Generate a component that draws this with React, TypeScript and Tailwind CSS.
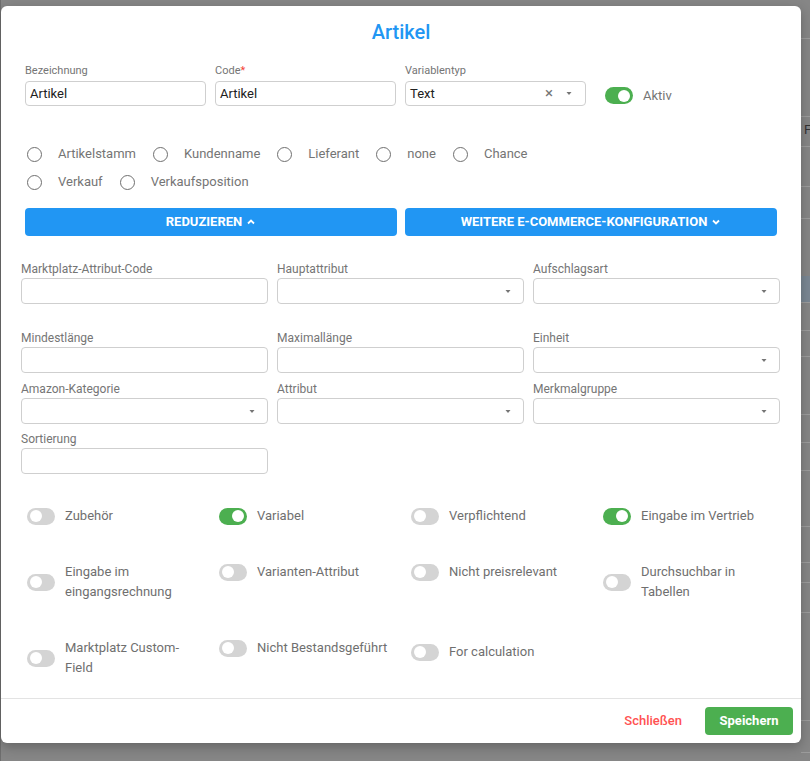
const font = { fontFamily: "Roboto, 'Liberation Sans', sans-serif" };

function Caret() {
  return (
    <svg width="8" height="5" viewBox="0 0 8 5" className="shrink-0">
      <path d="M1.5 1h5L4 4z" fill="#757575" />
    </svg>
  );
}

function Field({ label, select, className = "" }: { label: string; select?: boolean; className?: string }) {
  return (
    <div className={className}>
      <div className="mb-[3px] text-[12px] leading-[12px] text-[#757575]">{label}</div>
      <div className="flex h-[26px] items-center justify-end rounded-[4px] border border-[#cfcfcf] bg-white pr-[11px]">
        {select && <Caret />}
      </div>
    </div>
  );
}

function Toggle({ on }: { on?: boolean }) {
  return (
    <div
      className={`flex h-[17px] w-[28px] shrink-0 items-center rounded-full px-[3px] ${
        on ? "justify-end bg-[#4caf50]" : "justify-start bg-[#d4d4d4]"
      }`}
    >
      <div className="h-[12px] w-[12px] rounded-full bg-white" />
    </div>
  );
}

function ToggleItem({ label, on, className = "" }: { label: string; on?: boolean; className?: string }) {
  return (
    <div className={`flex items-center gap-[10px] ${className}`}>
      <Toggle on={on} />
      <span className="w-[136px] text-[13px] leading-[20px] text-[#6f6f6f]">{label}</span>
    </div>
  );
}

function Radio({ label }: { label: string }) {
  return (
    <div className="flex items-center gap-[16px]">
      <div className="h-[15px] w-[15px] rounded-full border-[1.5px] border-[#6f6f6f]" />
      <span className="text-[13px] text-[#757575]">{label}</span>
    </div>
  );
}

export default function App() {
  const bgRows = [38, 116, 146, 186, 218, 276, 302, 330, 356, 414, 442, 470, 526, 562, 582, 612, 720, 752];
  return (
    <div className="relative h-[761px] w-[810px] overflow-hidden bg-[#868686]" style={font}>
      {/* underlying page peeking out on the right */}
      {bgRows.map((y) => (
        <div key={y} className="absolute left-[801px] h-px w-[9px] bg-[#9c9c9c]" style={{ top: y }} />
      ))}
      <div className="absolute left-[801px] top-[276px] h-[26px] w-[9px] bg-[#7a8793]" />
      <div className="absolute left-[804px] top-[120px] text-[13px] text-[#333]">F</div>
      <div className="absolute left-0 top-0 h-full w-px bg-[#6e6e6e]" />

      <div className="absolute left-[1px] top-[6px] flex h-[737px] w-[800px] flex-col rounded-[6px] bg-white shadow-[0_4px_12px_rgba(0,0,0,0.25)]">
        <div className="flex-1">
          <h2 className="pt-[16px] text-center text-[20px] font-medium leading-[20px] text-[#2196f3]">Artikel</h2>

          <div className="mt-[23px] flex items-end gap-[9px] pl-[24px]">
            <div className="w-[181px]">
              <div className="mb-[4px] text-[11px] leading-[12px] text-[#757575]">Bezeichnung</div>
              <div className="flex h-[25px] items-center rounded-[4px] border border-[#cfcfcf] px-[4px] text-[13px] text-[#212121]">
                Artikel
              </div>
            </div>
            <div className="w-[181px]">
              <div className="mb-[4px] text-[11px] leading-[12px] text-[#757575]">
                Code<span className="text-[#f44336]">*</span>
              </div>
              <div className="flex h-[25px] items-center rounded-[4px] border border-[#cfcfcf] px-[4px] text-[13px] text-[#212121]">
                Artikel
              </div>
            </div>
            <div className="w-[181px]">
              <div className="mb-[4px] text-[11px] leading-[12px] text-[#757575]">Variablentyp</div>
              <div className="flex h-[25px] items-center rounded-[4px] border border-[#cfcfcf] pl-[4px] pr-[12px] text-[13px] text-[#212121]">
                <span className="flex-1">Text</span>
                <span className="mr-[12px] text-[15px] leading-none text-[#757575]">×</span>
                <Caret />
              </div>
            </div>
            <div className="ml-[10px] flex h-[25px] items-center gap-[10px] pt-[4px]">
              <Toggle on />
              <span className="text-[13px] text-[#757575]">Aktiv</span>
            </div>
          </div>

          <div className="mt-[34px] pl-[26px]">
            <div className="flex h-[28px] items-center gap-[17px]">
              <Radio label="Artikelstamm" />
              <Radio label="Kundenname" />
              <Radio label="Lieferant" />
              <Radio label="none" />
              <Radio label="Chance" />
            </div>
            <div className="flex h-[28px] items-center gap-[17px]">
              <Radio label="Verkauf" />
              <Radio label="Verkaufsposition" />
            </div>
          </div>

          <div className="mt-[12px] flex gap-[8px] pl-[24px]">
            <button className="flex h-[28px] w-[372px] items-center justify-center gap-[4px] rounded-[4px] bg-[#2196f3] text-[13px] font-bold text-white">
              REDUZIEREN
              <svg width="10" height="10" viewBox="0 0 10 10">
                <path d="M2 6.5L5 3.5l3 3" stroke="white" strokeWidth="1.8" fill="none" />
              </svg>
            </button>
            <button className="flex h-[28px] w-[372px] items-center justify-center gap-[4px] rounded-[4px] bg-[#2196f3] text-[13px] font-bold text-white">
              WEITERE E-COMMERCE-KONFIGURATION
              <svg width="10" height="10" viewBox="0 0 10 10">
                <path d="M2 3.5L5 6.5l3-3" stroke="white" strokeWidth="1.8" fill="none" />
              </svg>
            </button>
          </div>

          <div className="mt-[27px] grid w-[779px] grid-cols-3 gap-x-[9px] pl-[20px]">
            <Field label="Marktplatz-Attribut-Code" />
            <Field label="Hauptattribut" select />
            <Field label="Aufschlagsart" select />
            <Field label="Mindestlänge" className="mt-[28px]" />
            <Field label="Maximallänge" className="mt-[28px]" />
            <Field label="Einheit" select className="mt-[28px]" />
            <Field label="Amazon-Kategorie" select className="mt-[10px]" />
            <Field label="Attribut" select className="mt-[10px]" />
            <Field label="Merkmalgruppe" select className="mt-[10px]" />
            <Field label="Sortierung" className="mt-[9px]" />
          </div>

          <div className="mt-[32px] grid grid-cols-[192px_192px_192px_192px] items-start gap-y-[36px] pl-[26px]">
            <ToggleItem label="Zubehör" />
            <ToggleItem label="Variabel" on />
            <ToggleItem label="Verpflichtend" />
            <ToggleItem label="Eingabe im Vertrieb" on />
            <ToggleItem label="Eingabe im eingangsrechnung" />
            <ToggleItem label="Varianten-Attribut" />
            <ToggleItem label="Nicht preisrelevant" />
            <ToggleItem label="Durchsuchbar in Tabellen" />
            <ToggleItem label="Marktplatz Custom-Field" />
            <ToggleItem label="Nicht Bestandsgeführt" />
            <ToggleItem label="For calculation" className="mt-[4px]" />
          </div>
        </div>

        <div className="flex items-center justify-end gap-[7px] border-t border-[#e3e3e3] px-[8px] pb-[8px] pt-[8px]">
          <button className="h-[28px] px-[16px] text-[13px] font-medium text-[#ff5252]">Schließen</button>
          <button className="h-[28px] w-[88px] rounded-[4px] bg-[#4caf50] text-[13px] font-bold text-white">
            Speichern
          </button>
        </div>
      </div>
    </div>
  );
}
